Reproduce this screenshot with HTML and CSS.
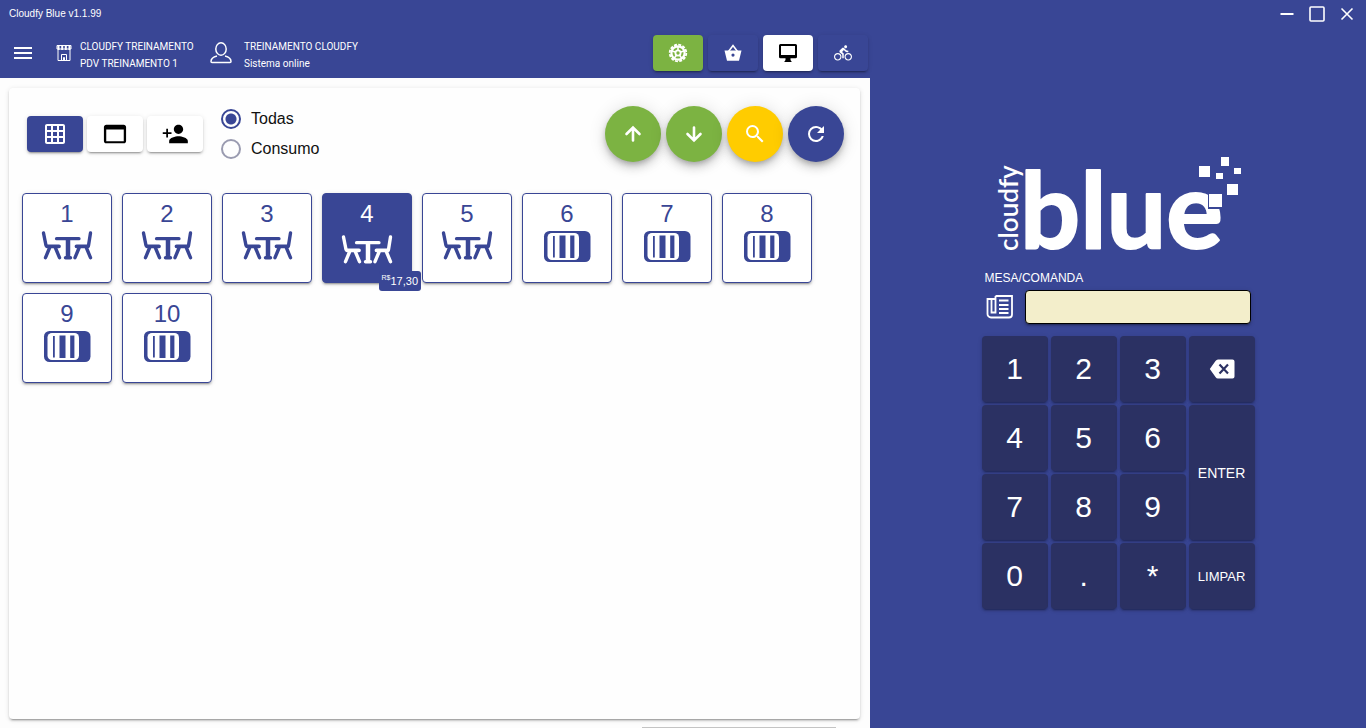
FILE: index.html
```html
<!DOCTYPE html>
<html lang="pt-BR">
<head>
<meta charset="utf-8">
<title>Cloudfy Blue</title>
<link rel="stylesheet" href="styles.css">
</head>
<body>
<svg class="defs" aria-hidden="true">
  <symbol id="table" viewBox="0 0 52 32">
    <g fill="none" stroke="currentColor" stroke-linecap="round" stroke-linejoin="round">
      <path d="M2.500 3 5 15.500M49.500 3 47.500 15.500" stroke-width="3.400"/>
      <path d="M6 16.300H18M35.500 16.300H47" stroke-width="3.800"/>
      <path d="M8.500 18 4.500 27.700M14.500 18l4 9.700M45.500 18l4 9.700M38 18l-4 9.700" stroke-width="3.400"/>
      <path d="M15.500 8.700H38" stroke-width="3.200"/>
      <path d="M27 9V27" stroke-width="4.500" stroke-linecap="butt"/>
      <path d="M24.500 27.700H29.500" stroke-width="3.400"/>
    </g>
  </symbol>
  <symbol id="card" viewBox="0 0 48 32">
    <rect x="1" y="1" width="46.500" height="31" rx="5.500" fill="currentColor"/>
    <rect x="4.500" y="3" width="31.500" height="27" rx="4.500" fill="#fff"/>
    <path d="M10 6h1.800v21.500H10zM16.500 5.500h6v22.500h-6zM27.200 5.500h4.200v22.500h-4.200z" fill="currentColor"/>
  </symbol>
</svg>

<header class="titlebar">
  <h1 class="app-name">Cloudfy Blue v1.1.99</h1>
  <div class="window-controls">
    <button aria-label="Minimizar"><svg viewBox="0 0 18 18"><path d="M2.500 9h13" stroke-width="2"/></svg></button>
    <button aria-label="Maximizar"><svg viewBox="0 0 18 18"><rect x="2" y="2" width="14" height="14" rx="1" stroke-width="1.600"/></svg></button>
    <button aria-label="Fechar"><svg viewBox="0 0 18 18"><path d="M3.500 3.500l11 11M14.500 3.500l-11 11" stroke-width="1.600"/></svg></button>
  </div>
</header>

<div class="workspace">
  <main class="main">
    <div class="toolbar">
      <button class="menu" aria-label="Menu"><svg viewBox="0 0 24 24"><path d="M3 18h18v-2H3v2zm0-5h18v-2H3v2zm0-7v2h18V6H3z" fill="currentColor"/></svg></button>
      <svg class="store-icon" viewBox="0 0 16 18" fill="none" stroke="currentColor"><path d="M1 1.500h14v3.500h-14z" stroke-width="1"/><path d="M2.500 1.500v4.500M6.200 1.500v4.500M9.800 1.500v4.500M13.500 1.500v4.500" stroke-width="2"/><path d="M2 6v10.500h12V6M5.500 16.500V10.500h5v6M7.500 16.500V13.500h1v3"/></svg>
      <p class="info">CLOUDFY TREINAMENTO<br>PDV TREINAMENTO 1</p>
      <svg class="user-icon" viewBox="0 0 22 22" fill="none" stroke="currentColor" stroke-width="1.500"><ellipse cx="11" cy="7" rx="5.200" ry="6.200"/><path d="M7 14C3 15 1 16.500 1 19.500q0 1 1 1h18q1 0 1-1c0-3-2-4.500-6-5.500"/></svg>
      <p class="info">TREINAMENTO CLOUDFY<br>Sistema online</p>
      <nav class="modes">
        <button class="mode mode-green" aria-label="Caixa"><svg viewBox="0 0 20 20" fill="none" stroke="currentColor"><circle cx="10" cy="10" r="8.300" stroke-width="1.800" stroke-dasharray="3 1.346"/><circle cx="10" cy="10" r="6.600" stroke-width="2.200"/><circle cx="10" cy="10" r="2.600" stroke-width="1.800"/><path d="M10 8V3M12 9.300l4.500-1.600M11.200 11.800l3 4M8.800 11.800l-3 4M8 9.300 3.500 7.700" stroke-width="1.600"/></svg></button>
        <button class="mode" aria-label="Balcão"><svg viewBox="0 0 20 20"><path d="M5.500 8.500 10 2.500l4.500 6" fill="none" stroke="currentColor" stroke-width="1.600"/><path fill-rule="evenodd" d="M1.500 7.500h17l-2.500 10.300H4zM10 10.500a1.600 1.600 0 1 0 0 3.200 1.600 1.600 0 0 0 0-3.200z" fill="currentColor"/></svg></button>
        <button class="mode mode-white" aria-label="Mesas"><svg viewBox="0 0 20 20"><path fill-rule="evenodd" d="M2.500 1h15A1.500 1.500 0 0 1 19 2.500v11.300a1.500 1.500 0 0 1-1.500 1.500h-5V17l1.300 2H6.200l1.300-2v-1.700h-5A1.500 1.500 0 0 1 1 13.800V2.500A1.500 1.500 0 0 1 2.500 1zM3 3v9h14V3z" fill="currentColor"/></svg></button>
        <button class="mode mode-bike" aria-label="Entrega"><svg viewBox="0 0 24 24"><path fill="currentColor" d="M15.500 5.500c1.100 0 2-.9 2-2s-.9-2-2-2-2 .9-2 2 .9 2 2 2zM5 12c-2.800 0-5 2.200-5 5s2.200 5 5 5 5-2.200 5-5-2.200-5-5-5zm0 8.500c-1.900 0-3.500-1.600-3.500-3.500s1.600-3.500 3.500-3.500 3.500 1.600 3.500 3.500-1.600 3.500-3.500 3.500zm5.800-10l2.400-2.400.8.800c1.300 1.300 3 2.100 5.100 2.100V9c-1.500 0-2.700-.6-3.600-1.500l-1.900-1.900c-.5-.4-1-.6-1.600-.6s-1.100.2-1.400.6L7.800 8.400c-.4.4-.6.9-.6 1.400 0 .6.2 1.100.6 1.400L11 14v5h2v-6.200l-2.200-2.300zM19 12c-2.800 0-5 2.200-5 5s2.200 5 5 5 5-2.200 5-5-2.200-5-5-5zm0 8.500c-1.900 0-3.500-1.600-3.500-3.500s1.600-3.500 3.500-3.500 3.500 1.600 3.500 3.500-1.600 3.500-3.500 3.500z"/></svg></button>
      </nav>
    </div>

    <div class="content">
      <section class="panel">
        <div class="filters">
          <div class="views">
            <button class="view view-active" aria-label="Grade"><svg class="icon-24" viewBox="0 0 24 24"><path fill="currentColor" d="M20 2H4c-1.100 0-2 .9-2 2v16c0 1.100.9 2 2 2h16c1.100 0 2-.9 2-2V4c0-1.100-.9-2-2-2zM8 20H4v-4h4v4zm0-6H4v-4h4v4zm0-6H4V4h4v4zm6 12h-4v-4h4v4zm0-6h-4v-4h4v4zm0-6h-4V4h4v4zm6 12h-4v-4h4v4zm0-6h-4v-4h4v4zm0-6h-4V4h4v4z"/></svg></button>
            <button class="view" aria-label="Janela"><svg class="icon-28" viewBox="0 0 24 24"><path fill="currentColor" d="M19.500 4h-15c-1.110 0-2 .9-2 2v12c0 1.100.89 2 2 2h15c1.100 0 2-.9 2-2V6c0-1.100-.9-2-2-2zm0 14.200h-15V8.200h15v10z"/></svg></button>
            <button class="view" aria-label="Adicionar cliente"><svg class="icon-28" viewBox="0 0 24 24"><path fill="currentColor" d="M15 12c2.210 0 4-1.790 4-4s-1.790-4-4-4-4 1.790-4 4 1.790 4 4 4zm-9-1.500V7.500H4.500v3h-3V12h3v3H6v-3h3v-1.500H6zm9 3.500c-2.670 0-8 1.340-8 4v2h16v-2c0-2.660-5.330-4-8-4z"/></svg></button>
          </div>
          <div class="radios">
            <label><input type="radio" name="filtro" checked>Todas</label>
            <label><input type="radio" name="filtro">Consumo</label>
          </div>
          <div class="actions">
            <button class="fab fab-green" aria-label="Subir"><svg viewBox="0 0 24 24"><path d="M12 18.500V5.500M5.500 12 12 5.500l6.500 6.500" fill="none" stroke="currentColor" stroke-width="2.600" stroke-linecap="round"/></svg></button>
            <button class="fab fab-green" aria-label="Descer"><svg viewBox="0 0 24 24"><path d="M12 5.500v13M5.500 12l6.500 6.500 6.500-6.500" fill="none" stroke="currentColor" stroke-width="2.600" stroke-linecap="round"/></svg></button>
            <button class="fab fab-yellow" aria-label="Buscar"><svg viewBox="0 0 24 24"><path fill="currentColor" d="M9.500 3A6.500 6.500 0 0 1 16 9.500C16 11.110 15.410 12.590 14.440 13.730L14.710 14H15.500L20.500 19 19 20.500 14 15.500V14.710L13.730 14.440C12.590 15.410 11.110 16 9.500 16A6.500 6.500 0 0 1 3 9.500 6.500 6.500 0 0 1 9.500 3M9.500 5C7 5 5 7 5 9.500S7 14 9.500 14 14 12 14 9.500 12 5 9.500 5Z"/></svg></button>
            <button class="fab fab-blue" aria-label="Atualizar"><svg viewBox="0 0 24 24"><path fill="currentColor" d="M17.650 6.350C16.200 4.900 14.210 4 12 4a8 8 0 0 0 0 16c3.730 0 6.840-2.550 7.730-6H17.650C16.830 16.330 14.610 18 12 18a6 6 0 0 1 0-12c1.660 0 3.140.69 4.220 1.780L13 11h7V4l-2.350 2.350Z"/></svg></button>
          </div>
        </div>

        <div class="tables">
          <button class="table"><span>1</span><svg class="table-icon"><use href="#table"/></svg></button>
          <button class="table"><span>2</span><svg class="table-icon"><use href="#table"/></svg></button>
          <button class="table"><span>3</span><svg class="table-icon"><use href="#table"/></svg></button>
          <button class="table table-busy"><span>4</span><svg class="table-icon"><use href="#table"/></svg><span class="total"><sup>R$</sup>17,30</span></button>
          <button class="table"><span>5</span><svg class="table-icon"><use href="#table"/></svg></button>
          <button class="table"><span>6</span><svg class="card-icon"><use href="#card"/></svg></button>
          <button class="table"><span>7</span><svg class="card-icon"><use href="#card"/></svg></button>
          <button class="table"><span>8</span><svg class="card-icon"><use href="#card"/></svg></button>
          <button class="table"><span>9</span><svg class="card-icon"><use href="#card"/></svg></button>
          <button class="table"><span>10</span><svg class="card-icon"><use href="#card"/></svg></button>
        </div>
      </section>
      <div class="drawer-edge"></div>
    </div>
  </main>

  <aside class="side">
    <div class="pad">
      <svg class="logo" viewBox="0 0 244 96" role="img" aria-label="cloudfy blue">
        <text class="logo-small" transform="translate(20 95) rotate(-90)">cloudfy</text>
        <text class="logo-big" x="22" y="92">blue</text>
        <path class="logo-gap" d="M210 36h16v17h-16z"/>
        <path fill="#fff" d="M211 38h13v13h-13zM201 10h11v11h-11zM223 1h8v9h-8zM218 17h7v6h-7zM236 12h7v6h-7zM229 28h11v11h-11z"/>
      </svg>
      <label class="field-label" for="comanda">MESA/COMANDA</label>
      <div class="field">
        <svg class="news-icon" viewBox="0 0 28 26" fill="none" stroke="currentColor" stroke-width="1.800"><path d="M9.500 2H26v18.500a3 3 0 0 1-3 3H5a3.500 3.500 0 0 1-3.500-3.500V5h8M9.500 2v16.500H5.500V5"/><path d="M13 6.500h9.500M13 11h9.500M13 15h9.500M13 19h9.500" stroke-width="2"/></svg>
        <input id="comanda" type="text">
      </div>
      <div class="keys">
        <button>1</button><button>2</button><button>3</button>
        <button aria-label="Apagar"><svg class="erase" viewBox="0 0 26 20"><path d="M9 .5h14.500A2 2 0 0 1 25.500 2.500v15a2 2 0 0 1-2 2H9Q7.500 19.500 6.500 18L.8 10 6.500 2Q7.500.5 9 .5z" fill="#fff"/><path d="M10.500 5.500l8.500 9M19 5.500l-8.500 9" stroke="#2b3163" stroke-width="2.200"/></svg></button>
        <button>4</button><button>5</button><button>6</button><button class="enter">ENTER</button>
        <button>7</button><button>8</button><button>9</button>
        <button>0</button><button>.</button><button>*</button><button class="clear">LIMPAR</button>
      </div>
    </div>
  </aside>
</div>
</body>
</html>
```
FILE: styles.css
```css
* { box-sizing: border-box; }

:root {
  --blue: #394695;
  --dark: #2b3163;
  --green: #7cb342;
  --lift: 0 3px 1px -2px rgba(0, 0, 0, .2), 0 2px 2px rgba(0, 0, 0, .14), 0 1px 5px rgba(0, 0, 0, .12);
}

body {
  margin: 0;
  height: 100vh;
  display: flex;
  flex-direction: column;
  overflow: hidden;
  background: var(--blue);
  color: #fff;
  font-family: "Liberation Sans", Arial, sans-serif;
}

button {
  display: flex;
  align-items: center;
  justify-content: center;
  padding: 0;
  border: 0;
  border-radius: 4px;
  background: none;
  color: inherit;
  font: inherit;
  cursor: pointer;
}

svg { display: block; flex: none; }
.defs { position: absolute; width: 0; height: 0; }

.titlebar {
  flex: none;
  height: 27px;
  display: flex;
  align-items: center;
  justify-content: space-between;
  padding: 0 10px 0 9px;
}
.app-name { margin: 0; font-size: 10px; font-weight: 400; }
.window-controls { display: flex; gap: 12px; }
.window-controls svg { width: 18px; height: 18px; fill: none; stroke: #fff; }

.workspace { flex: 1; min-height: 0; display: flex; }
.main { flex: 0 0 63.7%; display: flex; flex-direction: column; }

.toolbar {
  height: 51px;
  display: flex;
  align-items: center;
  padding: 0 2px 0 11px;
}
.menu svg { width: 24px; height: 24px; }
.store-icon { width: 16px; height: 18px; margin: 0 8px 0 21px; }
.user-icon { width: 22px; height: 22px; margin: 0 12px 0 14px; }
.info {
  min-width: 116px;
  margin: 5px 0 0;
  font-family: Roboto, "Liberation Sans", sans-serif;
  font-size: 10px;
  line-height: 17px;
  white-space: nowrap;
}
.modes { display: flex; gap: 5px; margin-left: auto; }
.mode { width: 50px; height: 36px; box-shadow: var(--lift); }
.mode svg { width: 20px; height: 20px; }
.mode-green { background: var(--green); }
.mode-white { background: #fff; color: #000; }
.mode-bike svg { width: 18px; height: 18px; }

.content {
  flex: 1;
  display: flex;
  flex-direction: column;
  padding: 10px 10px 0 9px;
  background: #fdfdfd;
}
.panel {
  flex: 1;
  border-radius: 4px;
  background: #fefefe;
  box-shadow: var(--lift);
}
.drawer-edge {
  width: 194px;
  height: 1px;
  margin: 8px 24px 0 auto;
  background: #c4c4c4;
}

.filters {
  display: flex;
  align-items: center;
  padding: 18px 16px 31px 18px;
}
.views { display: flex; gap: 4px; }
.view {
  width: 56px;
  height: 36px;
  background: #fff;
  color: #000;
  box-shadow: var(--lift);
}
.view-active { background: var(--blue); color: #fff; }
.icon-24 { width: 24px; height: 24px; }
.icon-28 { width: 28px; height: 28px; }

.radios { display: flex; flex-direction: column; gap: 10px; margin-left: 18px; }
.radios label {
  display: flex;
  align-items: center;
  gap: 10px;
  color: #111;
  font-size: 16px;
  line-height: 20px;
}
.radios input {
  appearance: none;
  width: 20px;
  height: 20px;
  margin: 0;
  border: 2px solid #9a9bb0;
  border-radius: 50%;
}
.radios input:checked {
  border-color: var(--blue);
  background: radial-gradient(circle, var(--blue) 5px, transparent 6px);
}

.actions { display: flex; gap: 5px; margin-left: auto; }
.fab {
  width: 56px;
  height: 56px;
  border-radius: 50%;
  box-shadow: 0 3px 5px -1px rgba(0, 0, 0, .2), 0 6px 10px rgba(0, 0, 0, .14), 0 1px 18px rgba(0, 0, 0, .12);
}
.fab svg { width: 24px; height: 24px; }
.fab-green { background: var(--green); }
.fab-yellow { background: #fc0; }
.fab-blue { background: var(--blue); }

.tables { display: flex; flex-wrap: wrap; gap: 10px; padding: 0 13px; }
.table {
  position: relative;
  width: 90px;
  height: 90px;
  flex-direction: column;
  justify-content: flex-start;
  gap: 2px;
  padding-top: 6px;
  border: 1px solid var(--blue);
  background: #fff;
  color: var(--blue);
  font-size: 24px;
  line-height: 28px;
  box-shadow: var(--lift);
}
.table-busy { gap: 6px; background: var(--blue); color: #fff; }
.table-icon { width: 52px; height: 32px; }
.card-icon { width: 48px; height: 32px; }
.total {
  position: absolute;
  right: -10px;
  bottom: -9px;
  padding: 0 3px;
  border-radius: 3px;
  background: var(--blue);
  font-size: 11px;
  line-height: 20px;
}
.total sup { font-size: 7px; line-height: 1px; }

.side {
  flex: 1;
  display: flex;
  justify-content: center;
  align-items: flex-start;
  padding-top: 129px;
}
.pad { display: flex; flex-direction: column; }
.logo { width: 244px; height: 96px; margin-right: 13px; align-self: flex-end; overflow: visible; }
.logo text { fill: #fff; font-family: Lato, sans-serif; }
.logo-big { font-size: 106px; font-weight: 700; stroke: #fff; stroke-width: 2px; stroke-linejoin: round; }
.logo-small { font-size: 26px; font-weight: 600; }
.logo-gap { fill: var(--blue); }

.field-label { margin: 18px 3px 4px; font-size: 12px; line-height: 16px; }
.field { display: flex; align-items: center; gap: 11px; padding: 0 4px; }
.news-icon { width: 28px; height: 26px; }
.field input {
  flex: 1;
  min-width: 0;
  height: 34px;
  padding: 0 8px;
  border: 1px solid #000;
  border-radius: 4px;
  background: #f3eecb;
  font: inherit;
  box-shadow: var(--lift);
}

.keys {
  display: grid;
  grid-template-columns: repeat(4, 66px);
  grid-auto-rows: 66px;
  gap: 3px;
  margin-top: 12px;
}
.keys button { background: var(--dark); font-size: 30px; box-shadow: var(--lift); }
.keys .enter { grid-column: 4; grid-row: 2 / span 2; font-size: 14px; }
.keys .clear { font-size: 13px; }
.erase { width: 26px; height: 20px; }
```
